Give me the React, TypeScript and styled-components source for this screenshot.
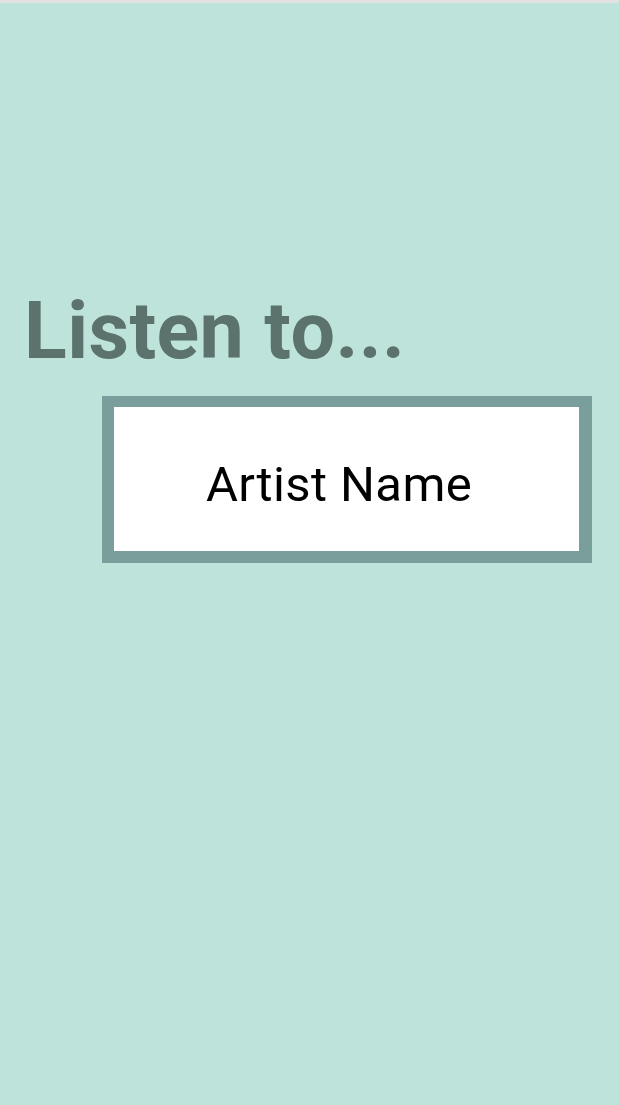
import React from 'react'
import styled, { createGlobalStyle } from 'styled-components'

const GlobalStyle = createGlobalStyle`
  html, body {
    margin: 0;
    padding: 0;
    height: 100%;
  }
  body {
    font-family: Roboto, "Liberation Sans", sans-serif;
    background: #bee3db;
  }
  #root {
    min-height: 100%;
  }
`

const Screen = styled.div`
  min-height: 1105px;
  display: flex;
  flex-direction: column;
  background: #bee3db;
  border-top: 3px solid #e1e1e1;
  box-sizing: border-box;
`

const Content = styled.div`
  display: flex;
  flex-direction: column;
  align-items: flex-start;
  padding: 283px 0 0 24px;
`

const Title = styled.h1`
  margin: 0;
  font-family: Roboto, "Liberation Sans", sans-serif;
  font-weight: 700;
  font-size: 79px;
  line-height: 91px;
  color: #5b726d;
  letter-spacing: 0.4px;
`

const ArtistBox = styled.div`
  margin: 19px 0 0 78px;
  width: 490px;
  height: 167px;
  box-sizing: border-box;
  border: 12px solid #7a9e9b;
  border-top-width: 11px;
  border-right-width: 13px;
  background: #ffffff;
  display: flex;
  align-items: flex-start;
  padding: 49px 0 0 92px;
`

const ArtistName = styled.span`
  font-family: Roboto, "Liberation Sans", sans-serif;
  font-size: 49px;
  line-height: 57px;
  color: #000000;
  letter-spacing: 0.4px;
`

export default function App() {
  return (
    <>
      <GlobalStyle />
      <Screen>
        <Content>
          <Title>Listen to...</Title>
          <ArtistBox>
            <ArtistName>Artist Name</ArtistName>
          </ArtistBox>
        </Content>
      </Screen>
    </>
  )
}
